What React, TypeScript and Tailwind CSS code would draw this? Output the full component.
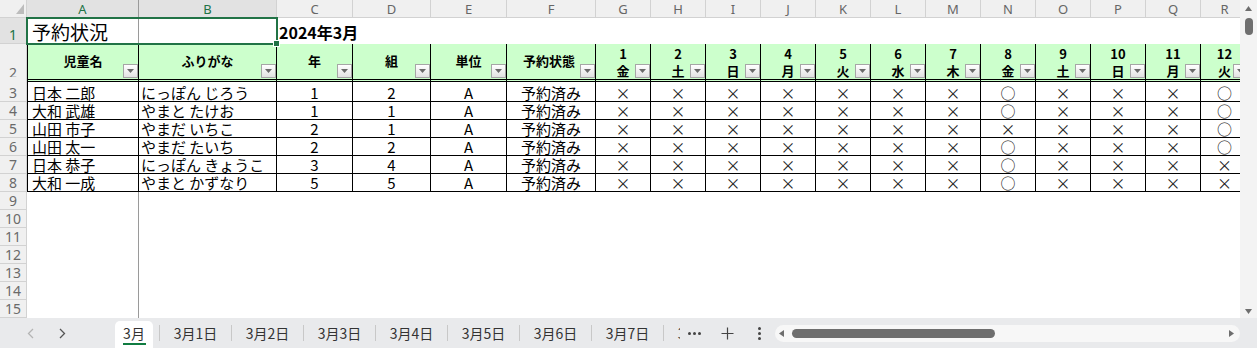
import React from "react";

const JP = "font-['Noto_Sans_CJK_JP','Noto_Sans',sans-serif]";
const GRID =
  "grid grid-cols-[27px_112px_138px_76px_78px_76px_89px_repeat(11,55px)_48px]";

const letters = "ABCDEFGHIJKLMNOPQR".split("");
const days: [string, string][] = [
  ["1", "金"],
  ["2", "土"],
  ["3", "日"],
  ["4", "月"],
  ["5", "火"],
  ["6", "水"],
  ["7", "木"],
  ["8", "金"],
  ["9", "土"],
  ["10", "日"],
  ["11", "月"],
  ["12", "火"],
];

const rows = [
  { name: "日本 二郎", kana: "にっぽん じろう", year: "1", cls: "2", res: "xxxxxxxoxxxo" },
  { name: "大和 武雄", kana: "やまと たけお", year: "1", cls: "1", res: "xxxxxxxoxxxo" },
  { name: "山田 市子", kana: "やまだ いちこ", year: "2", cls: "1", res: "xxxxxxxxxxxo" },
  { name: "山田 太一", kana: "やまだ たいち", year: "2", cls: "2", res: "xxxxxxxoxxxo" },
  { name: "日本 恭子", kana: "にっぽん きょうこ", year: "3", cls: "4", res: "xxxxxxxoxxxx" },
  { name: "大和 一成", kana: "やまと かずなり", year: "5", cls: "5", res: "xxxxxxxoxxxx" },
];

const tabs = ["3月1日", "3月2日", "3月3日", "3月4日", "3月5日", "3月6日", "3月7日", "3月8日"];

function RowHead({ n, active }: { n: string; active?: boolean }) {
  return (
    <div
      className={`flex items-end justify-center border-r border-b border-[#d2d2d2] text-[14px] leading-[17px] font-['Noto_Sans',sans-serif] ${
        active ? "bg-[#e2e2e2] text-[#217346]" : "bg-[#f0f0f0] text-[#6a6a6a]"
      }`}
    >
      {n}
    </div>
  );
}

function Drop() {
  return (
    <span className="absolute right-0 bottom-[1px] w-[15px] h-[14px] border border-[#a6a6a6] bg-linear-to-b from-white to-[#e2e2e2] flex items-center justify-center">
      <svg width="7" height="4" viewBox="0 0 7 4">
        <path d="M0 0h7L3.5 4z" fill="#6b6b6b" />
      </svg>
    </span>
  );
}

const hdr =
  "relative bg-[#ccffcc] border-r border-black border-b-[3px] border-double border-b-black font-bold text-[13px] text-black";

function Mark({ v }: { v: string }) {
  return v === "o" ? <span>○</span> : <span>×</span>;
}

function Arrow({ dir }: { dir: "up" | "down" | "left" | "right" }) {
  const d =
    dir === "up"
      ? "M0 5L3.5 0L7 5z"
      : dir === "down"
      ? "M0 0h7L3.5 5z"
      : dir === "left"
      ? "M5 0v7L0 3.5z"
      : "M0 0v7L5 3.5z";
  const w = dir === "up" || dir === "down" ? 7 : 5;
  const h = dir === "up" || dir === "down" ? 5 : 7;
  return (
    <svg width={w} height={h} viewBox={`0 0 ${w} ${h}`}>
      <path d={d} fill="#6e6e6e" />
    </svg>
  );
}

export default function App() {
  return (
    <div className={`w-[1257px] h-[348px] overflow-hidden bg-white flex flex-col ${JP}`}>
      <div className="h-[318px] flex">
        <div className="w-[1240px] overflow-hidden">
          <div className="w-[1249px]">
            {/* column headers */}
            <div className={`${GRID} h-[18px]`}>
              <div className="relative bg-[#f0f0f0] border-r border-b border-[#d2d2d2]">
                <svg className="absolute right-[2px] bottom-[3px]" width="8" height="10" viewBox="0 0 8 10">
                  <path d="M8 0V10H0z" fill="#bcbcbc" />
                </svg>
              </div>
              {letters.map((l, i) => (
                <div
                  key={l}
                  className={`flex items-end justify-center border-r border-b border-[#d2d2d2] text-[13px] leading-[16px] font-['Noto_Sans',sans-serif] ${
                    i < 2 ? "bg-[#e2e2e2] text-[#217346]" : "bg-[#f0f0f0] text-[#666666]"
                  } ${i === 0 ? "border-r-[#9a9a9a]" : ""}`}
                >
                  {l}
                </div>
              ))}
            </div>

            {/* row 1 */}
            <div className={`${GRID} h-[26px]`}>
              <RowHead n="1" active />
              <div className="relative border-r border-[#9a9a9a] flex items-end pl-[5px] text-[19px] leading-[25px] text-black">
                予約状況
                <div className="absolute left-[-1px] top-[-1px] w-[252px] h-[28px] border-2 border-[#217346] z-10">
                  <span className="absolute right-[-4px] bottom-[-4px] w-[7px] h-[7px] bg-[#217346] border border-white" />
                </div>
              </div>
              <div />
              <div className="flex items-end pl-[2px] whitespace-nowrap font-bold text-[16px] leading-[23px] text-black">
                2024年3月
              </div>
              {Array.from({ length: 15 }).map((_, i) => (
                <div key={i} />
              ))}
            </div>

            {/* row 2 headers */}
            <div className={`${GRID} h-[33px]`}>
              <RowHead n="2" />
              {["児童名", "ふりがな", "年", "組", "単位", "予約状態"].map((t, i) => (
                <div
                  key={t}
                  className={`${hdr} flex items-center justify-center pb-[2px] ${i === 0 ? "border-l" : ""}`}
                >
                  <span className={i === 5 ? "mr-[4px]" : ""}>{t}</span>
                  <Drop />
                </div>
              ))}
              {days.map(([d, w]) => (
                <div key={d} className={`${hdr} flex flex-col items-center pt-[1px] leading-[17px]`}>
                  <span>{d}</span>
                  <span>{w}</span>
                  <Drop />
                </div>
              ))}
            </div>

            {/* data rows */}
            {rows.map((r, ri) => (
              <div key={ri} className={`${GRID} ${ri === 0 ? "h-[25px]" : "h-[18px]"}`}>
                <RowHead n={String(ri + 3)} />
                <div className="border-l border-r border-b border-black flex items-end pl-[4px] text-[15px] leading-[16px] text-black whitespace-nowrap">
                  {r.name}
                </div>
                <div className="border-r border-b border-black flex items-end pl-[2px] text-[15px] leading-[16px] text-black whitespace-nowrap">
                  {r.kana}
                </div>
                {[r.year, r.cls, "A", "予約済み"].map((v, i) => (
                  <div
                    key={i}
                    className="border-r border-b border-black flex items-end justify-center text-[15px] leading-[16px] text-black"
                  >
                    {v}
                  </div>
                ))}
                {r.res.split("").map((v, i) => (
                  <div
                    key={i}
                    className="border-r border-b border-black flex items-end justify-center text-[15px] leading-[16px] text-[#222]"
                  >
                    <Mark v={v} />
                  </div>
                ))}
              </div>
            ))}

            {/* empty rows */}
            {[9, 10, 11, 12, 13, 14, 15].map((n) => (
              <div key={n} className={`${GRID} h-[18px]`}>
                <RowHead n={String(n)} />
                <div className="border-r border-[#9a9a9a]" />
              </div>
            ))}
          </div>
        </div>

        {/* vertical scrollbar */}
        <div className="w-[17px] bg-[#f3f3f3] flex flex-col items-center">
          <div className="mt-[6px]">
            <Arrow dir="up" />
          </div>
          <div className="mt-[7px] w-[8px] h-[17px] rounded-full bg-[#6e6e6e]" />
          <div className="flex-1" />
          <div className="mb-[4px]">
            <Arrow dir="down" />
          </div>
        </div>
      </div>

      {/* sheet tab bar */}
      <div className="h-[30px] bg-[#e9eaec] flex items-stretch text-[14px] text-[#333]">
        <div className="w-[115px] flex items-center">
          <svg className="ml-[27px]" width="7" height="11" viewBox="0 0 7 11">
            <path d="M6 1L1.5 5.5L6 10" stroke="#b4b4b4" strokeWidth="1.3" fill="none" />
          </svg>
          <svg className="ml-[25px]" width="7" height="11" viewBox="0 0 7 11">
            <path d="M1 1L5.5 5.5L1 10" stroke="#555" strokeWidth="1.3" fill="none" />
          </svg>
        </div>
        <div className="w-[565px] overflow-hidden flex items-stretch">
          <div className="w-[38px] shrink-0 self-end h-[27px] bg-white rounded-t-[5px] flex flex-col items-center pt-[4px]">
            <span className="leading-[16px]">3月</span>
            <span className="mt-[2px] w-[23px] h-[2px] bg-[#107c41]" />
          </div>
          <div className="w-[6px] shrink-0" />
          {tabs.map((t) => (
            <div key={t} className="w-[72px] shrink-0 flex items-center">
              <span className="w-px h-[16px] bg-[#c8c8c8]" />
              <span className="flex-1 text-center whitespace-nowrap">{t}</span>
            </div>
          ))}
        </div>
        <div className="w-[28px] flex items-center justify-center gap-[2px]">
          <span className="w-[3px] h-[3px] rounded-full bg-[#444]" />
          <span className="w-[3px] h-[3px] rounded-full bg-[#444]" />
          <span className="w-[3px] h-[3px] rounded-full bg-[#444]" />
        </div>
        <div className="w-[38px] flex items-center justify-center">
          <svg width="13" height="13" viewBox="0 0 13 13">
            <path d="M6.5 0.5v12M0.5 6.5h12" stroke="#444" strokeWidth="1.2" />
          </svg>
        </div>
        <div className="w-[26px] flex flex-col items-center justify-center gap-[2px]">
          <span className="w-[3px] h-[3px] rounded-full bg-[#444]" />
          <span className="w-[3px] h-[3px] rounded-full bg-[#444]" />
          <span className="w-[3px] h-[3px] rounded-full bg-[#444]" />
        </div>
        <div className="w-[3px]" />
        <div className="w-[465px] flex items-center">
          <div className="w-full h-[17px] rounded-full bg-[#f7f7f7] flex items-center">
            <div className="ml-[4px]">
              <Arrow dir="left" />
            </div>
            <div className="ml-[8px] w-[203px] h-[9px] rounded-full bg-[#6e6e6e]" />
            <div className="flex-1" />
            <div className="mr-[6px]">
              <Arrow dir="right" />
            </div>
          </div>
        </div>
        <div className="w-[17px]" />
      </div>
    </div>
  );
}
